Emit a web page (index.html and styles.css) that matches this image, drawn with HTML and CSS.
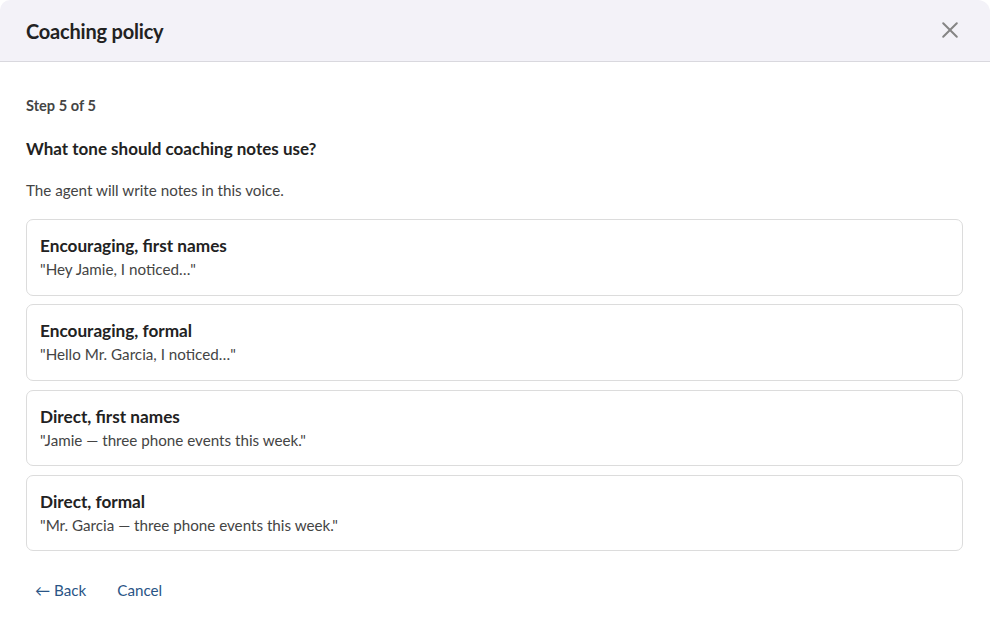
FILE: index.html
```html
<!DOCTYPE html>
<html lang="en">
<head>
<meta charset="utf-8">
<title>Coaching policy</title>
<link rel="stylesheet" href="styles.css">
</head>
<body>
<div class="dialog">
  <header class="dialog-header">
    <h1 class="dialog-title">Coaching policy</h1>
    <button class="close-btn" aria-label="Close">
      <svg width="18" height="18" viewBox="0 0 18 18"><path d="M2.2 2.2 L15.8 15.8 M15.8 2.2 L2.2 15.8" stroke="#858585" stroke-width="2" stroke-linecap="round" fill="none"/></svg>
    </button>
  </header>
  <main class="dialog-body">
    <div class="step">Step 5 of 5</div>
    <h2 class="question">What tone should coaching notes use?</h2>
    <p class="hint">The agent will write notes in this voice.</p>
    <div class="options">
      <div class="option">
        <div class="option-title">Encouraging, first names</div>
        <div class="option-sample">"Hey Jamie, I noticed…"</div>
      </div>
      <div class="option">
        <div class="option-title">Encouraging, formal</div>
        <div class="option-sample">"Hello Mr. Garcia, I noticed…"</div>
      </div>
      <div class="option">
        <div class="option-title">Direct, first names</div>
        <div class="option-sample">"Jamie — three phone events this week."</div>
      </div>
      <div class="option">
        <div class="option-title">Direct, formal</div>
        <div class="option-sample">"Mr. Garcia — three phone events this week."</div>
      </div>
    </div>
    <div class="actions">
      <a class="link" href="#">← Back</a>
      <a class="link" href="#">Cancel</a>
    </div>
  </main>
</div>
</body>
</html>
```
FILE: styles.css
```css
* { box-sizing: border-box; }
html, body {
  margin: 0;
  background: #fff;
}
body {
  font-family: Lato, "Open Sans", sans-serif;
  color: #222;
}
.dialog {
  width: 990px;
  min-height: 622px;
  background: #fff;
}
.dialog-header {
  height: 62px;
  background: #f3f2f8;
  border-bottom: 1px solid #d9d8de;
  border-radius: 10px 12px 0 0;
  display: flex;
  align-items: center;
  justify-content: space-between;
  padding: 0 31px 0 26px;
}
.dialog-title {
  margin: 0;
  font-size: 20px;
  font-weight: 700;
  color: #222;
  letter-spacing: -0.2px;
}
.close-btn {
  border: 0;
  background: none;
  padding: 0;
  width: 18px;
  height: 18px;
  display: flex;
  cursor: pointer;
  margin-top: -1px;
}
.dialog-body {
  padding: 35px 27px 0 26px;
}
.step {
  font-size: 14.6px;
  font-weight: 700;
  color: #444;
  line-height: 17px;
}
.question {
  margin: 25px 0 0;
  font-size: 17px;
  font-weight: 700;
  line-height: 20px;
  color: #222;
}
.hint {
  margin: 22px 0 0;
  font-size: 15.2px;
  line-height: 18px;
  color: #444;
}
.options {
  margin-top: 20px;
  display: flex;
  flex-direction: column;
  gap: 8.75px;
}
.option {
  height: 76.5px;
  border: 1px solid #dcdcdc;
  border-radius: 7px;
  padding: 15px 13px 14px;
}
.option-title {
  font-size: 17.2px;
  font-weight: 700;
  line-height: 22px;
  color: #222;
}
.option-sample {
  margin-top: 2px;
  font-size: 15.2px;
  line-height: 20px;
  color: #444;
}
.actions {
  margin-top: 30px;
  display: flex;
  gap: 31px;
  padding-left: 9px;
}
.link {
  font-size: 15.2px;
  line-height: 18px;
  color: #2a5486;
  text-decoration: none;
}
```
